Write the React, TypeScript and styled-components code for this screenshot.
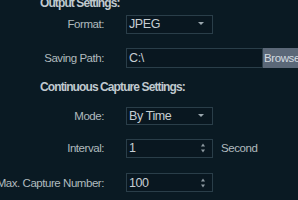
import React from 'react';
import styled, { createGlobalStyle } from 'styled-components';

const GlobalStyle = createGlobalStyle`
  html, body {
    margin: 0;
    padding: 0;
    background: #0a1a23;
    overflow: hidden;
  }
  body {
    width: 298px;
    height: 200px;
    font-family: "Liberation Sans", Arial, sans-serif;
  }
`;

const Panel = styled.div`
  display: flex;
  flex-direction: column;
  width: 298px;
  height: 200px;
  overflow: hidden;
  margin-top: -8px;
`;

const SectionTitle = styled.div<{ $h: number }>`
  height: ${p => p.$h}px;
  display: flex;
  align-items: center;
  padding-left: 40px;
  font-size: 12px;
  font-weight: 700;
  letter-spacing: -0.9px;
  color: #c0c9cf;
  white-space: nowrap;
`;

const Row = styled.div<{ $mt: number; $h: number }>`
  display: grid;
  grid-template-columns: 104px auto;
  column-gap: 22px;
  align-items: center;
  margin-top: ${p => p.$mt}px;
  height: ${p => p.$h}px;
`;

const Label = styled.div`
  justify-self: end;
  width: max-content;
  font-size: 11.5px;
  letter-spacing: -0.45px;
  color: #b0babf;
  white-space: nowrap;
`;

const Controls = styled.div`
  display: flex;
  align-items: center;
  height: 100%;
`;

const Box = styled.div<{ $w: number }>`
  position: relative;
  box-sizing: border-box;
  width: ${p => p.$w}px;
  height: 100%;
  border: 1px solid #2a3e49;
  background: #091720;
  display: flex;
  align-items: center;
  padding-left: 2px;
  font-size: 12.5px;
  letter-spacing: -0.4px;
  color: #c6ced3;
`;

const Caret = styled.span`
  position: absolute;
  right: 8px;
  top: 50%;
  margin-top: -2px;
  width: 0;
  height: 0;
  border-left: 3px solid transparent;
  border-right: 3px solid transparent;
  border-top: 3px solid #9aa6ad;
`;

const Spinner = styled.span`
  position: absolute;
  right: 7px;
  top: 50%;
  transform: translateY(-50%);
  display: flex;
  flex-direction: column;
  gap: 3px;
`;

const Tri = styled.span<{ $up?: boolean }>`
  width: 0;
  height: 0;
  border-left: 2.5px solid transparent;
  border-right: 2.5px solid transparent;
  ${p => (p.$up ? 'border-bottom: 3px solid #8e9aa1;' : 'border-top: 3px solid #8e9aa1;')}
`;

const BrowseButton = styled.div`
  height: 100%;
  width: 40px;
  flex-shrink: 0;
  background: #5b6878;
  color: #d4dbe0;
  font-size: 11.5px;
  letter-spacing: -0.4px;
  display: flex;
  align-items: center;
  padding-left: 1px;
`;

const Unit = styled.span`
  margin-left: 8px;
  font-size: 11.5px;
  letter-spacing: -0.4px;
  color: #b0babf;
`;

const Select = ({ value }: { value: string }) => (
  <Box $w={87}>
    {value}
    <Caret />
  </Box>
);

const Spin = ({ value }: { value: string }) => (
  <Box $w={87}>
    {value}
    <Spinner>
      <Tri $up />
      <Tri />
    </Spinner>
  </Box>
);

const App = () => {
  return (
    <>
      <GlobalStyle />
      <Panel>
        <SectionTitle $h={24}>Output Settings:</SectionTitle>
        <Row $mt={0} $h={20}>
          <Label>Format:</Label>
          <Controls>
            <Select value="JPEG" />
          </Controls>
        </Row>
        <Row $mt={14} $h={21}>
          <Label>Saving Path:</Label>
          <Controls>
            <Box $w={137}>C:\</Box>
            <BrowseButton>Browse</BrowseButton>
          </Controls>
        </Row>
        <SectionTitle $h={41}>Continuous Capture Settings:</SectionTitle>
        <Row $mt={0} $h={19}>
          <Label>Mode:</Label>
          <Controls>
            <Select value="By Time" />
          </Controls>
        </Row>
        <Row $mt={14} $h={20}>
          <Label>Interval:</Label>
          <Controls>
            <Spin value="1" />
            <Unit>Second</Unit>
          </Controls>
        </Row>
        <Row $mt={15} $h={20}>
          <Label>Max. Capture Number:</Label>
          <Controls>
            <Spin value="100" />
          </Controls>
        </Row>
      </Panel>
    </>
  );
};

export default App;
